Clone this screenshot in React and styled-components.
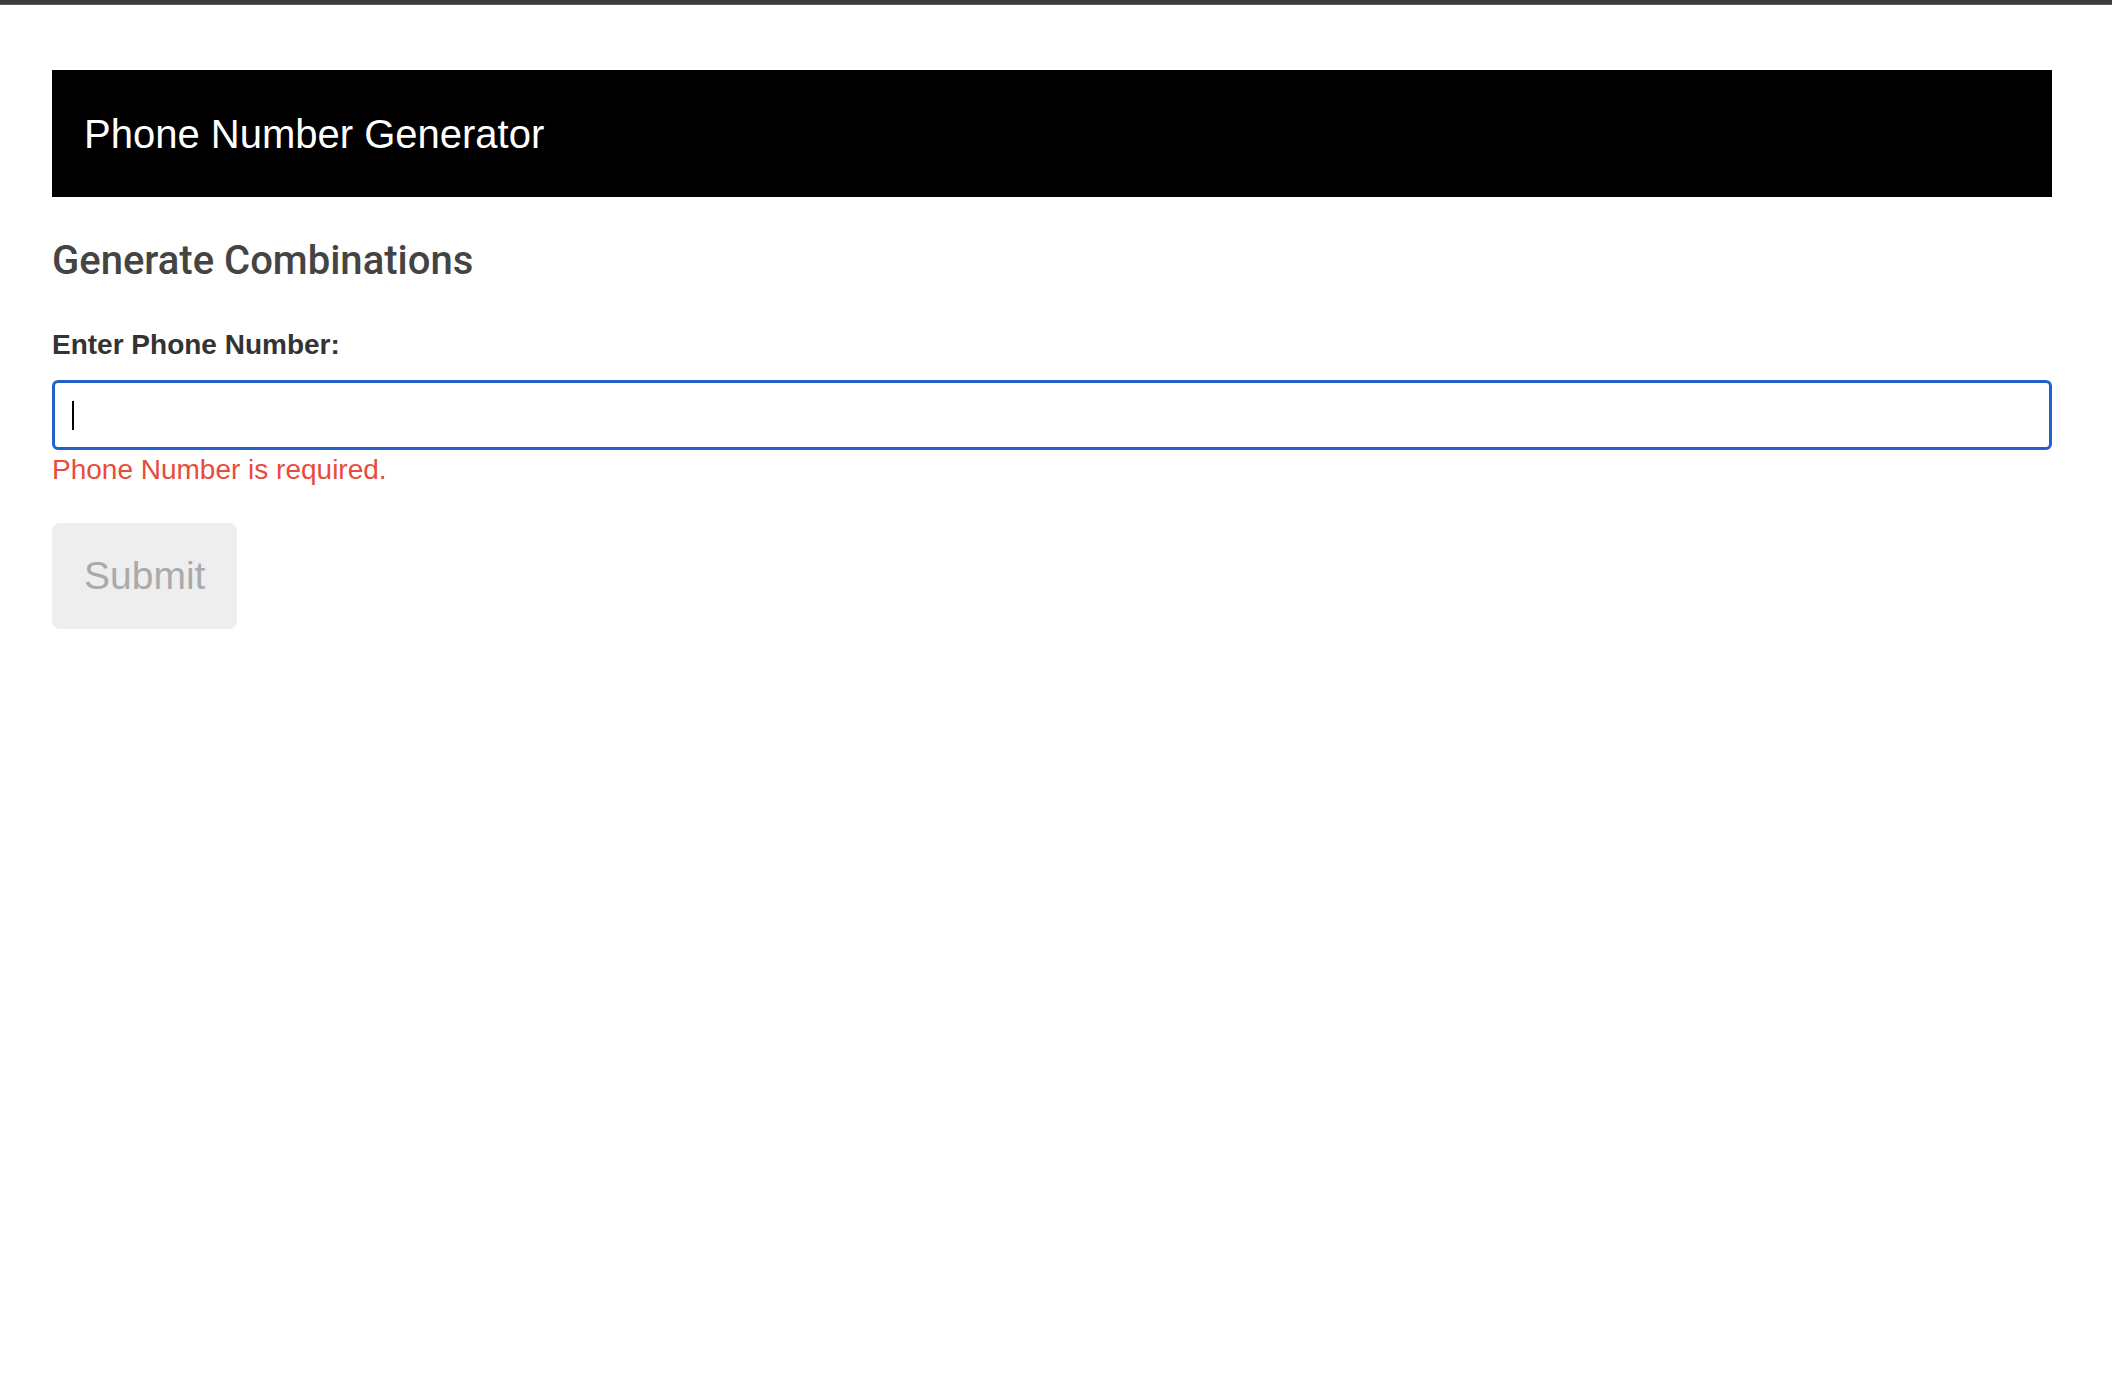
import React from "react";
import styled, { createGlobalStyle } from "styled-components";

const GlobalStyle = createGlobalStyle`
    html, body {
        margin: 0;
        padding: 0;
        background: #ffffff;
    }
    body {
        font-family: "Liberation Sans", Arial, sans-serif;
    }
`;

const TopStrip = styled.div`
    height: 4px;
    background: #3a3a3f;
    border-bottom: 1px solid #5a5a60;
`;

const Page = styled.main`
    padding: 65px 60px 0 52px;
`;

const Banner = styled.header`
    height: 127px;
    background: #000000;
    display: flex;
    align-items: center;
    padding: 0 32px;
`;

const BannerTitle = styled.h1`
    margin: 0;
    color: #ffffff;
    font-family: "Liberation Sans", Arial, sans-serif;
    font-weight: 400;
    font-size: 40px;
    line-height: 48px;
`;

const SectionTitle = styled.h2`
    margin: 40px 0 0;
    color: #444444;
    font-family: Roboto, "Liberation Sans", sans-serif;
    font-weight: 500;
    font-size: 40px;
    line-height: 48px;
`;

const Form = styled.form`
    display: flex;
    flex-direction: column;
    align-items: flex-start;
    margin-top: 43px;
`;

const Label = styled.label`
    color: #333333;
    font-weight: 700;
    font-size: 28px;
    line-height: 34px;
`;

const InputWrap = styled.div`
    position: relative;
    width: 100%;
    margin-top: 18px;
`;

const PhoneInput = styled.input`
    box-sizing: border-box;
    display: block;
    width: 100%;
    height: 70px;
    padding: 0 16px;
    border: 3px solid #2361c9;
    border-radius: 6px;
    outline: none;
    font-family: "Liberation Sans", Arial, sans-serif;
    font-size: 28px;
    color: #000000;
    caret-color: transparent;
`;

// drawn text cursor sitting over the empty field
const Caret = styled.span`
    position: absolute;
    left: 20px;
    top: 21px;
    width: 2px;
    height: 29px;
    background: #000000;
    pointer-events: none;
`;

const ErrorText = styled.div`
    margin-top: 3px;
    color: #e74c3c;
    font-size: 28px;
    line-height: 34px;
`;

const SubmitButton = styled.button`
    margin-top: 36px;
    height: 106px;
    padding: 0 32px;
    border: none;
    border-radius: 8px;
    background: #eeeeee;
    color: #aaaaaa;
    font-family: "Liberation Sans", Arial, sans-serif;
    font-size: 39px;
    cursor: not-allowed;
`;

export default function App() {
    return (
        <>
            <GlobalStyle />
            <TopStrip />
            <Page>
                <Banner>
                    <BannerTitle>Phone Number Generator</BannerTitle>
                </Banner>
                <SectionTitle>Generate Combinations</SectionTitle>
                <Form onSubmit={(e) => e.preventDefault()}>
                    <Label htmlFor="phone">Enter Phone Number:</Label>
                    <InputWrap>
                        <PhoneInput id="phone" type="text" autoFocus />
                        <Caret />
                    </InputWrap>
                    <ErrorText>Phone Number is required.</ErrorText>
                    <SubmitButton type="submit" disabled>Submit</SubmitButton>
                </Form>
            </Page>
        </>
    );
}
